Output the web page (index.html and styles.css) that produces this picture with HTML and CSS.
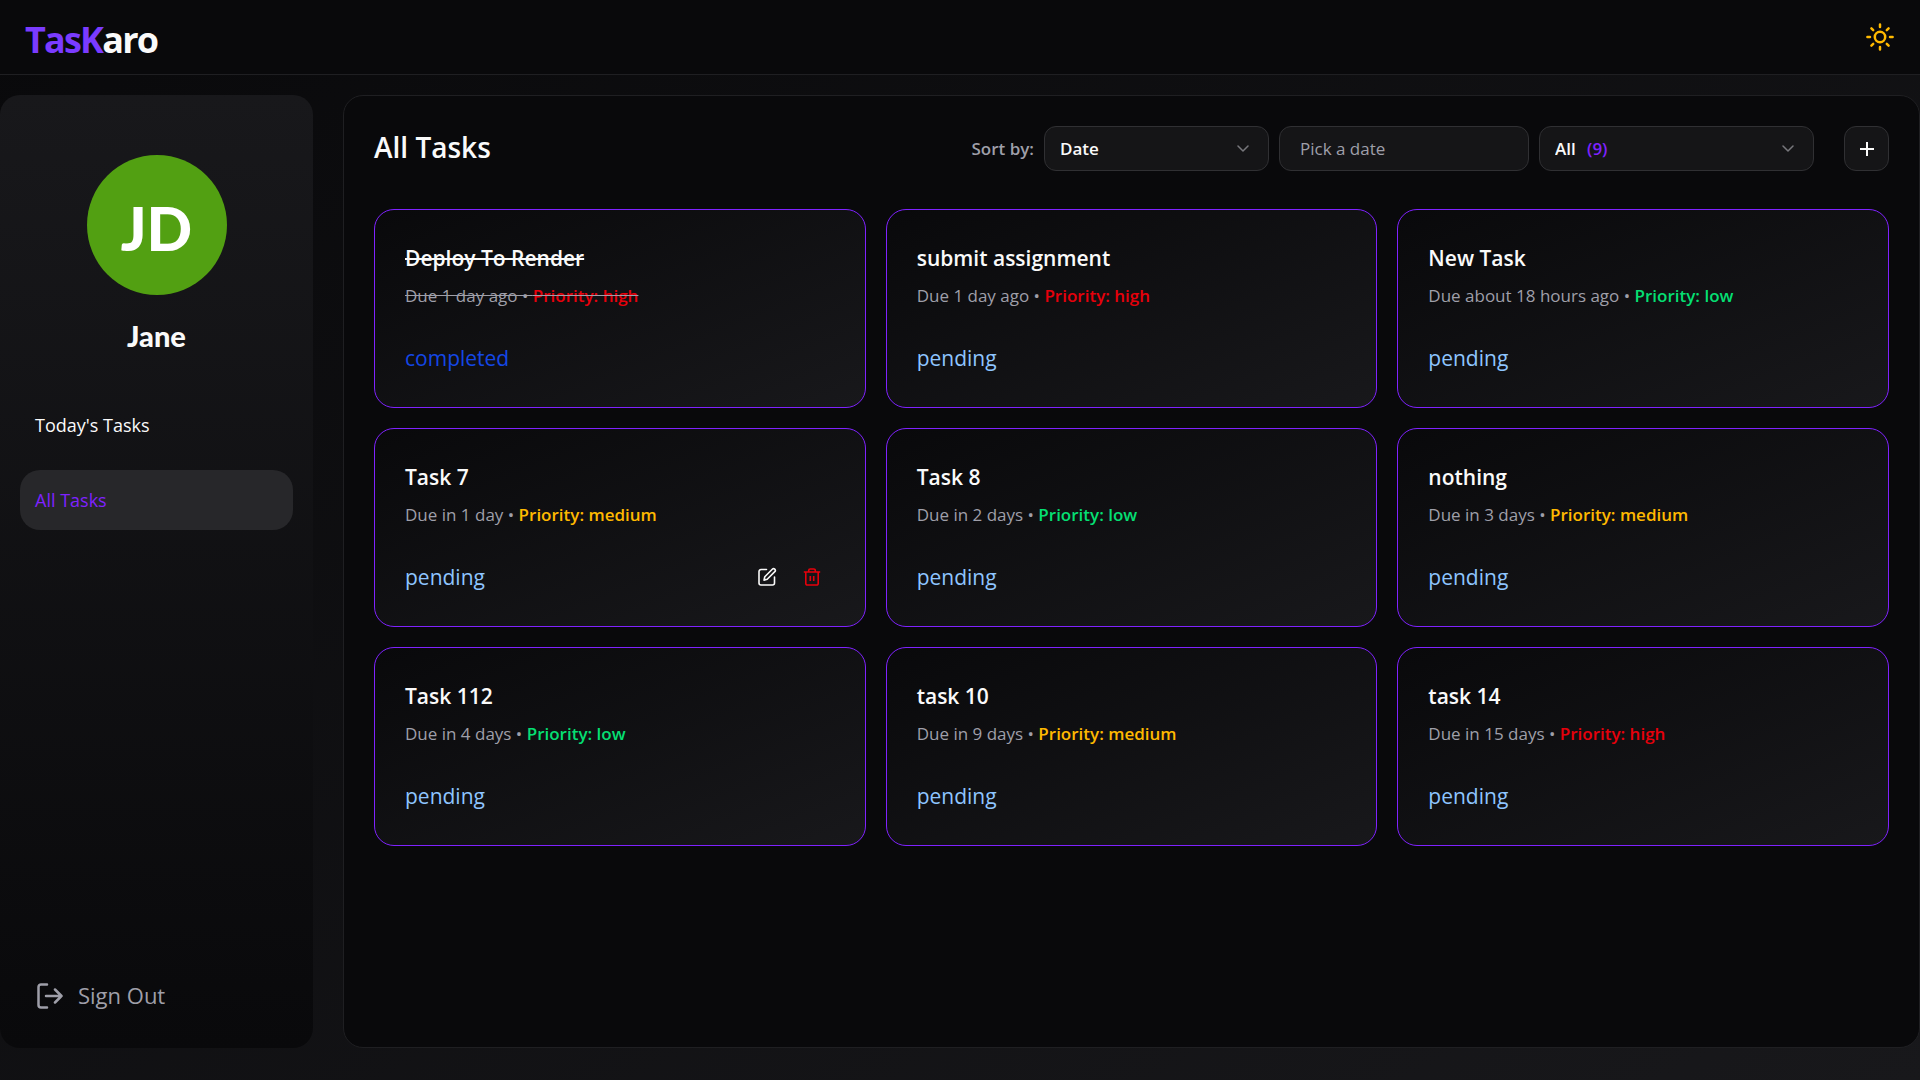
FILE: index.html
```html
<!DOCTYPE html>
<html lang="en">
<head>
<meta charset="utf-8">
<meta name="viewport" content="width=device-width, initial-scale=1">
<title>TasKaro</title>
<link rel="stylesheet" href="styles.css">
</head>
<body class="app">
<svg class="sprite" aria-hidden="true">
  <symbol id="chevron" viewBox="0 0 12 8"><path d="M1 1l5 5 5-5" fill="none" stroke="currentColor" stroke-width="1.5" stroke-linecap="round" stroke-linejoin="round"/></symbol>
</svg>

<header class="topbar">
  <a class="logo" href="#"><span class="logo-accent">TasK</span>aro</a>
  <button class="theme-toggle" type="button" aria-label="Toggle theme">
    <svg viewBox="0 0 30 30" width="30" height="30" fill="none" stroke="currentColor" stroke-width="2.5" stroke-linecap="round">
      <circle cx="15" cy="15" r="5.2"/>
      <path d="M15 2.4v2.6M15 25v2.6M2.4 15H5M25 15h2.6M6.4 6.4l1.8 1.8M21.8 21.8l1.8 1.8M6.4 23.6l1.8-1.8M21.8 8.2l1.8-1.8"/>
    </svg>
  </button>
</header>

<div class="shell">
  <aside class="sidebar">
    <div class="avatar">JD</div>
    <p class="user-name">Jane</p>
    <nav class="nav">
      <a class="nav-item" href="#">Today's Tasks</a>
      <a class="nav-item nav-item-active" href="#" aria-current="page">All Tasks</a>
    </nav>
    <button class="sign-out" type="button">
      <svg viewBox="0 0 26 26" width="26" height="26" fill="none" stroke="currentColor" stroke-width="2.5" stroke-linecap="round" stroke-linejoin="round">
        <path d="M10 1.5H4A2.5 2.5 0 0 0 1.5 4v18A2.5 2.5 0 0 0 4 24.500h6M9 13h15.500M18 6.500l6.500 6.500-6.500 6.500"/>
      </svg>
      Sign Out
    </button>
  </aside>

  <main class="panel">
    <div class="panel-head">
      <h1 class="panel-title">All Tasks</h1>
      <form class="filters">
        <label class="sort-label" for="sort">Sort by:</label>
        <div class="select select-sort">
          <select id="sort"><option>Date</option></select>
          <svg class="chevron" width="12" height="8"><use href="#chevron"/></svg>
        </div>
        <input class="date-input" type="text" placeholder="Pick a date" aria-label="Pick a date">
        <div class="select select-status">
          <select aria-label="Status"><option>All</option></select>
          <span class="count">(9)</span>
          <svg class="chevron" width="12" height="8"><use href="#chevron"/></svg>
        </div>
        <button class="add" type="button" aria-label="Add task">
          <svg viewBox="0 0 14 14" width="14" height="14" stroke="currentColor" stroke-width="2"><path d="M7 0v14M0 7h14"/></svg>
        </button>
      </form>
    </div>

    <section class="grid">
      <article class="card">
        <h2 class="card-title done">Deploy To Render</h2>
        <p class="meta done">Due 1 day ago • <span class="priority high">Priority: high</span></p>
        <div class="card-foot"><span class="status completed">completed</span></div>
      </article>
      <article class="card">
        <h2 class="card-title">submit assignment</h2>
        <p class="meta">Due 1 day ago • <span class="priority high">Priority: high</span></p>
        <div class="card-foot"><span class="status">pending</span></div>
      </article>
      <article class="card">
        <h2 class="card-title">New Task</h2>
        <p class="meta">Due about 18 hours ago • <span class="priority low">Priority: low</span></p>
        <div class="card-foot"><span class="status">pending</span></div>
      </article>
      <article class="card">
        <h2 class="card-title">Task 7</h2>
        <p class="meta">Due in 1 day • <span class="priority medium">Priority: medium</span></p>
        <div class="card-foot">
          <span class="status">pending</span>
          <div class="actions">
            <button class="action" type="button" aria-label="Edit task">
              <svg viewBox="0 0 20 20" width="20" height="20" fill="none" stroke="currentColor" stroke-width="1.6" stroke-linecap="round" stroke-linejoin="round">
                <path d="M9.500 2.500H4A2 2 0 0 0 2 4.500V16a2 2 0 0 0 2 2h11.500a2 2 0 0 0 2-2v-6M15.300 2.200a1.700 1.700 0 0 1 2.500 2.400l-7.600 7.700-3.200.8.800-3.300z"/>
              </svg>
            </button>
            <button class="action action-delete" type="button" aria-label="Delete task">
              <svg viewBox="0 0 20 20" width="20" height="20" fill="none" stroke="currentColor" stroke-width="1.600" stroke-linejoin="round">
                <path d="M1.800 5h16.400M3.800 5v11.500a1.500 1.500 0 0 0 1.500 1.500h9.400a1.500 1.500 0 0 0 1.500-1.500V5M6.700 5V3.500a1.500 1.500 0 0 1 1.500-1.500h3.600a1.500 1.500 0 0 1 1.500 1.500V5M8.300 9v5M11.700 9v5"/>
              </svg>
            </button>
          </div>
        </div>
      </article>
      <article class="card">
        <h2 class="card-title">Task 8</h2>
        <p class="meta">Due in 2 days • <span class="priority low">Priority: low</span></p>
        <div class="card-foot"><span class="status">pending</span></div>
      </article>
      <article class="card">
        <h2 class="card-title">nothing</h2>
        <p class="meta">Due in 3 days • <span class="priority medium">Priority: medium</span></p>
        <div class="card-foot"><span class="status">pending</span></div>
      </article>
      <article class="card">
        <h2 class="card-title">Task 112</h2>
        <p class="meta">Due in 4 days • <span class="priority low">Priority: low</span></p>
        <div class="card-foot"><span class="status">pending</span></div>
      </article>
      <article class="card">
        <h2 class="card-title">task 10</h2>
        <p class="meta">Due in 9 days • <span class="priority medium">Priority: medium</span></p>
        <div class="card-foot"><span class="status">pending</span></div>
      </article>
      <article class="card">
        <h2 class="card-title">task 14</h2>
        <p class="meta">Due in 15 days • <span class="priority high">Priority: high</span></p>
        <div class="card-foot"><span class="status">pending</span></div>
      </article>
    </section>
  </main>
</div>
</body>
</html>
```
FILE: styles.css
```css
:root {
  --bg: #09090b;
  --surface: #18181b;
  --line: #1f1f22;
  --field: #151517;
  --field-line: #303033;
  --text: #fafafa;
  --muted: #9f9fa9;
  --accent: #7f22fe;
}

*, *::before, *::after { box-sizing: border-box; }

h1, h2, p { margin: 0; }

button, input, select { font: inherit; color: inherit; }

button { padding: 0; border: 0; background: none; cursor: pointer; }

a { color: inherit; text-decoration: none; }

svg { display: block; }

.sprite { display: none; }

.app {
  display: flex;
  flex-direction: column;
  min-height: 100vh;
  margin: 0;
  background: linear-gradient(to bottom right, var(--bg), var(--surface));
  color: var(--text);
  font-family: "Segoe UI", "Open Sans", "Noto Sans", sans-serif;
  font-size: 17px;
}

/* Top bar */
.topbar {
  display: flex;
  align-items: center;
  justify-content: space-between;
  height: 75px;
  padding: 0 25px;
  border-bottom: 1px solid var(--line);
  background: var(--bg);
}

.logo {
  padding-top: 4px;
  font-size: 36px;
  font-weight: 700;
  letter-spacing: -0.05em;
}

.logo-accent { color: #7a3bff; }

.theme-toggle { color: #ffb900; }

/* Page shell */
.shell {
  display: flex;
  flex: 1;
  gap: 30px;
  padding: 20px 0 32px;
}

.sidebar {
  display: flex;
  flex: 0 0 313px;
  flex-direction: column;
  padding: 60px 20px 30px;
  border-radius: 20px;
  background: linear-gradient(to bottom, var(--surface), var(--bg));
}

.avatar {
  display: grid;
  place-items: center;
  align-self: center;
  width: 140px;
  height: 140px;
  padding-top: 6px;
  border-radius: 50%;
  background: #52a012;
  color: #fff;
  font-family: "Segoe UI", Lato, sans-serif;
  font-size: 60px;
  font-weight: 900;
}

.user-name {
  margin-top: 20px;
  font-family: "Segoe UI", Lato, sans-serif;
  font-size: 29px;
  font-weight: 900;
  line-height: 42px;
  text-align: center;
}

.nav {
  display: flex;
  flex-direction: column;
  gap: 15px;
  margin-top: 38px;
}

.nav-item {
  padding: 0 15px;
  border-radius: 20px;
  font-size: 18px;
  line-height: 60px;
}

.nav-item-active { background: #27272a; color: var(--accent); }

.sign-out {
  display: flex;
  align-items: center;
  gap: 15px;
  margin-top: auto;
  padding: 0 17px;
  color: var(--muted);
  font-size: 22px;
  line-height: 45px;
}

/* Main panel */
.panel {
  flex: 1;
  padding: 30px;
  border: 1px solid var(--line);
  border-radius: 20px;
  background: var(--bg);
}

.panel-head {
  display: flex;
  align-items: flex-start;
  justify-content: space-between;
  margin-bottom: 38px;
}

.panel-title {
  font-size: 28px;
  font-weight: 600;
  line-height: 42px;
}

.filters { display: flex; align-items: center; gap: 10px; }

.sort-label { color: var(--muted); font-weight: 600; }

.select,
.date-input,
.add {
  height: 45px;
  border: 1px solid var(--field-line);
  border-radius: 12px;
  background: var(--field);
}

/* The count and the chevron share the select's grid row */
.select { display: grid; grid-template-columns: 47px 1fr auto; align-items: center; }

.select select {
  grid-area: 1 / 1 / 2 / -1;
  height: 100%;
  padding: 0 15px;
  border: 0;
  background: transparent;
  font-weight: 600;
  appearance: none;
}

.select option { background: var(--field); }

.select-sort { width: 225px; }

.select-status { width: 275px; }

.count {
  grid-area: 1 / 2;
  color: var(--accent);
  font-weight: 600;
  pointer-events: none;
}

.chevron {
  grid-area: 1 / 3;
  margin-right: 19px;
  color: #77777c;
  pointer-events: none;
}

.date-input { width: 250px; padding: 0 20px; }

.date-input::placeholder { color: var(--muted); opacity: 1; }

.add {
  display: grid;
  place-items: center;
  width: 45px;
  margin-left: 20px;
}

/* Task cards */
.grid {
  display: grid;
  grid-template-columns: repeat(3, 1fr);
  gap: 20px;
}

.card {
  padding: 31px 30px;
  border: 1px solid var(--accent);
  border-radius: 20px;
  background: linear-gradient(to bottom right, var(--bg), var(--surface));
}

.card-title {
  font-size: 21px;
  font-weight: 600;
  line-height: 34px;
}

.meta {
  margin: 8px 0 31px;
  color: var(--muted);
  line-height: 26px;
}

.done { text-decoration: line-through; }

.priority { font-weight: 600; }

.high { color: #e7000b; }

.medium { color: #ffb900; }

.low { color: #05df72; }

.card-foot {
  display: flex;
  align-items: center;
  justify-content: space-between;
}

.status {
  color: #8ec5ff;
  font-size: 21px;
  line-height: 36px;
}

.completed { color: #1447e6; }

.actions { display: flex; }

.action {
  display: grid;
  place-items: center;
  width: 45px;
  height: 36px;
}

.action-delete { color: #e7000b; }
```
